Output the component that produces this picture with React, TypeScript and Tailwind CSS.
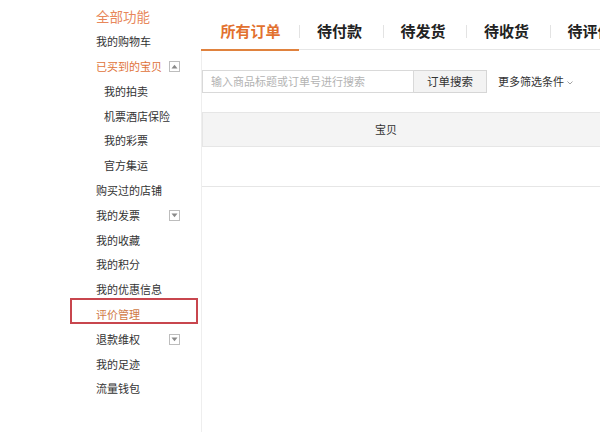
import React from "react";

const font = { fontFamily: '"Noto Sans CJK SC", "Noto Sans", sans-serif' };

function Toggle({ up }: { up?: boolean }) {
  return (
    <span className="ml-auto mr-[21px] flex h-[11px] w-[11px] items-center justify-center border border-[#bdbdbd] bg-white">
      <svg width="7" height="5" viewBox="0 0 7 5">
        {up ? <path d="M0.5 4.5 L3.5 0.8 L6.5 4.5 Z" fill="#8a8a8a" /> : <path d="M0.5 0.5 L3.5 4.2 L6.5 0.5 Z" fill="#8a8a8a" />}
      </svg>
    </span>
  );
}

type Item = { label: string; sub?: boolean; color?: string; toggle?: "up" | "down"; boxed?: boolean; head?: boolean };

const items: Item[] = [
  { label: "全部功能", head: true, color: "text-[#e8875a]" },
  { label: "我的购物车" },
  { label: "已买到的宝贝", color: "text-[#e0733a]", toggle: "up" },
  { label: "我的拍卖", sub: true },
  { label: "机票酒店保险", sub: true },
  { label: "我的彩票", sub: true },
  { label: "官方集运", sub: true },
  { label: "购买过的店铺" },
  { label: "我的发票", toggle: "down" },
  { label: "我的收藏" },
  { label: "我的积分" },
  { label: "我的优惠信息" },
  { label: "评价管理", color: "text-[#d07a45]", boxed: true },
  { label: "退款维权", toggle: "down" },
  { label: "我的足迹" },
  { label: "流量钱包" },
];

const tabs = ["待付款", "待发货", "待收货", "待评价"];

export default function App() {
  return (
    <div className="flex h-[432px] w-[600px] overflow-hidden bg-white text-[#333]" style={font}>
      {/* Sidebar */}
      <div className="w-[201px] shrink-0 pt-[4.6px]">
        {items.map((it) => (
          <div
            key={it.label}
            className={`relative flex h-[24.8px] items-center ${it.sub ? "pl-[104px]" : "pl-[96px]"} ${
              it.color ?? "text-[#333]"
            } ${it.head ? "text-[13.5px]" : "text-[11px]"}`}
          >
            <span className="whitespace-nowrap leading-none">{it.label}</span>
            {it.toggle && <Toggle up={it.toggle === "up"} />}
            {it.boxed && (
              <span className="absolute left-[70px] top-[-4px] h-[26px] w-[128px] border-2 border-[#c8464e]" />
            )}
          </div>
        ))}
      </div>

      {/* Main */}
      <div className="flex min-w-0 flex-1 flex-col">
        {/* Tabs */}
        <div className="flex h-[51px] shrink-0 items-stretch">
          <div className="flex w-[98px] shrink-0 items-center justify-center border-b-2 border-[#e0823e] pt-[13px] pl-[1px] text-[15px] font-bold text-[#e2712f]">
            所有订单
          </div>
          <div className="mb-[1px] flex flex-1 items-stretch border-b border-[#e6e6e6]">
            {tabs.map((t) => (
              <div key={t} className="flex w-[83.5px] shrink-0 items-center pt-[13px]">
                <span className="h-[13px] w-px bg-[#e3e3e3]" />
                <span className="flex-1 whitespace-nowrap pl-[17px] text-[15px] font-bold text-[#222]">{t}</span>
              </div>
            ))}
          </div>
        </div>

        <div className="flex flex-1 flex-col border-l border-[#eeeeee]">
          {/* Search row */}
          <div className="mt-[19px] flex h-[23px] items-stretch">
            <div className="flex w-[212px] items-center border border-[#d9d9d9] pl-[8px] text-[11px] text-[#b3b3b3]">
              输入商品标题或订单号进行搜索
            </div>
            <div className="flex w-[73px] items-center justify-center border border-l-0 border-[#d6d6d6] bg-[#f3f3f3] text-[11.5px] text-[#333]">
              订单搜索
            </div>
            <div className="ml-[11px] flex items-center text-[11px] text-[#333]">
              更多筛选条件
              <svg className="ml-[3px] mt-[2px]" width="6" height="4" viewBox="0 0 6 4">
                <path d="M0.5 0.5 L3 3 L5.5 0.5" stroke="#999" fill="none" strokeWidth="0.9" />
              </svg>
            </div>
          </div>

          {/* Header bar */}
          <div className="mt-[19px] flex h-[35px] items-center border border-r-0 border-[#e6e6e6] bg-[#f4f4f4]">
            <span className="ml-[172px] text-[11px] text-[#333]">宝贝</span>
          </div>

          {/* Content box */}
          <div className="mt-[39px] flex-1 border-t border-[#e6e6e6]" />
        </div>
      </div>
    </div>
  );
}
